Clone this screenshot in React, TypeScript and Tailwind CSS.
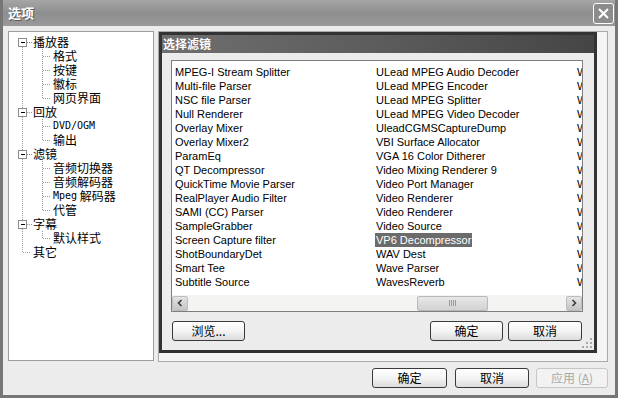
import type { ReactNode } from "react"

const COL1 = [
  "MPEG-I Stream Splitter",
  "Multi-file Parser",
  "NSC file Parser",
  "Null Renderer",
  "Overlay Mixer",
  "Overlay Mixer2",
  "ParamEq",
  "QT Decompressor",
  "QuickTime Movie Parser",
  "RealPlayer Audio Filter",
  "SAMI (CC) Parser",
  "SampleGrabber",
  "Screen Capture filter",
  "ShotBoundaryDet",
  "Smart Tee",
  "Subtitle Source",
]

const COL2 = [
  "ULead MPEG Audio Decoder",
  "ULead MPEG Encoder",
  "ULead MPEG Splitter",
  "ULead MPEG Video Decoder",
  "UleadCGMSCaptureDump",
  "VBI Surface Allocator",
  "VGA 16 Color Ditherer",
  "Video Mixing Renderer 9",
  "Video Port Manager",
  "Video Renderer",
  "Video Renderer",
  "Video Source",
  "VP6 Decompressor",
  "WAV Dest",
  "Wave Parser",
  "WavesReverb",
]

const COL3 = [
  "WDM Capture",
  "WDM Streaming",
  "WDM Tee",
  "WM ASF Reader",
  "WM ASF Writer",
  "WMAudio Decoder",
  "WMVideo Decoder",
  "WMVideo Decoder DMO",
  "WMVideo8 Encoder",
  "WMVideo9 Encoder",
  "Windows Media",
  "Windows Media Player",
  "Windows Media Audio",
  "Windows Media Video",
  "WST Codec",
  "WST Decoder",
]

type TreeRow = { t: string; l: 0 | 1; box?: boolean; end?: boolean; mono?: string }

const TREE: TreeRow[] = [
  { t: "播放器", l: 0, box: true },
  { t: "格式", l: 1 },
  { t: "按键", l: 1 },
  { t: "徽标", l: 1 },
  { t: "网页界面", l: 1, end: true },
  { t: "回放", l: 0, box: true },
  { t: "", l: 1, mono: "DVD/OGM" },
  { t: "输出", l: 1, end: true },
  { t: "滤镜", l: 0, box: true },
  { t: "音频切换器", l: 1 },
  { t: "音频解码器", l: 1 },
  { t: " 解码器", l: 1, mono: "Mpeg" },
  { t: "代管", l: 1, end: true },
  { t: "字幕", l: 0, box: true },
  { t: "默认样式", l: 1, end: true },
  { t: "其它", l: 0 },
]

const DOT = { stroke: "#9a9a9a", strokeWidth: 1, strokeDasharray: "1 1" }

function TreeLines({ row, i }: { row: TreeRow; i: number }) {
  const last = i === TREE.length - 1
  if (row.l === 0) {
    return (
      <svg width="24" height="14" className="shrink-0" shapeRendering="crispEdges">
        {row.box ? (
          <>
            {i > 0 && <line x1="13.5" y1="0" x2="13.5" y2="3" {...DOT} />}
            <line x1="13.5" y1="12" x2="13.5" y2="14" {...DOT} />
            <line x1="18" y1="7.5" x2="23" y2="7.5" {...DOT} />
            <rect x="9.5" y="3.5" width="8" height="8" fill="#fff" stroke="#8c8c8c" />
            <line x1="11.5" y1="7.5" x2="16" y2="7.5" stroke="#000" />
          </>
        ) : (
          <>
            <line x1="13.5" y1="0" x2="13.5" y2={last ? 7.5 : 14} {...DOT} />
            <line x1="13.5" y1="7.5" x2="22" y2="7.5" {...DOT} />
          </>
        )}
      </svg>
    )
  }
  return (
    <svg width="44" height="14" className="shrink-0" shapeRendering="crispEdges">
      <line x1="13.5" y1="0" x2="13.5" y2="14" {...DOT} />
      <line x1="33.5" y1="0" x2="33.5" y2={row.end ? 7.5 : 14} {...DOT} />
      <line x1="33.5" y1="7.5" x2="42" y2="7.5" {...DOT} />
    </svg>
  )
}

function XpButton({ children, className = "", disabled }: { children: ReactNode; className?: string; disabled?: boolean }) {
  return (
    <button
      className={`h-[20px] rounded-[3px] border text-[12px] leading-none flex items-center justify-center font-['Noto_Sans_CJK_SC',sans-serif] ${
        disabled
          ? "border-[#c6c6c6] bg-[#f2f2f2] text-[#a9a9a9]"
          : "border-[#3a3a3a] bg-linear-to-b from-white via-[#f4f4f4] to-[#dcdcdc] text-black"
      } ${className}`}
    >
      {children}
    </button>
  )
}

function ScrollArrow({ dir }: { dir: "l" | "r" }) {
  return (
    <div className="w-[16px] h-[15px] shrink-0 rounded-[2px] border border-[#bdbdbd] bg-linear-to-b from-[#e4e4e4] to-[#c4c4c4] flex items-center justify-center">
      <svg width="8" height="8" viewBox="0 0 8 8">
        <path d={dir === "l" ? "M5.5 1 L2.5 4 L5.5 7" : "M2.5 1 L5.5 4 L2.5 7"} fill="none" stroke="#3c3c3c" strokeWidth="1.6" />
      </svg>
    </div>
  )
}

export default function App() {
  return (
    <div className="w-[618px] h-[398px] flex flex-col overflow-hidden bg-[#ececec] border-x-[3px] border-b-[3px] border-[#767676] font-['Liberation_Sans','Noto_Sans_CJK_SC',sans-serif] text-black">
      {/* 标题栏 */}
      <div className="h-[26px] shrink-0 flex items-center justify-between pl-[5px] pr-[1px] bg-linear-to-b from-[#a6a6a6] via-[#8e8e8e] to-[#999999]">
        <span className="text-[13px] font-bold text-white font-['Noto_Sans_CJK_SC',sans-serif] [text-shadow:1px_1px_0_#5a5a5a]">选项</span>
        <div className="w-[21px] h-[21px] rounded-[3px] border border-white bg-[#8c8c8c] flex items-center justify-center">
          <svg width="13" height="13" viewBox="0 0 13 13">
            <path d="M2 2 L11 11 M11 2 L2 11" stroke="#fff" strokeWidth="2" />
          </svg>
        </div>
      </div>

      {/* 主体 */}
      <div className="h-[336px] shrink-0 flex gap-[4px] pl-[5px] pr-[7px] pt-[5px]">
        {/* 树 */}
        <div className="w-[146px] h-[330px] border border-[#9d9d9d] bg-white pt-[3px] font-['Noto_Sans_CJK_SC',sans-serif] text-[12px] leading-[14px]">
          {TREE.map((row, i) => (
            <div key={i} className="h-[14px] flex items-center whitespace-pre">
              <TreeLines row={row} i={i} />
              {row.mono && <span className="font-['DejaVu_Sans_Mono',monospace] text-[10px]">{row.mono}</span>}
              <span>{row.t}</span>
            </div>
          ))}
        </div>

        {/* 页面 */}
        <div className="w-[450px] h-[331px] border border-[#a9a9a9] bg-[#f5f5f5]">
          <div className="relative w-[438px] h-[321px] border-[3px] border-[#333333] bg-[#ececec] flex flex-col">
            <div className="h-[18px] shrink-0 flex items-center pl-[1px] bg-linear-to-r from-[#6f6f6f] via-[#5c5c5c] to-[#454545]">
              <span className="text-[12px] font-bold text-white font-['Noto_Sans_CJK_SC',sans-serif]">选择滤镜</span>
            </div>

            {/* 列表 */}
            <div className="mt-[7px] ml-[9px] w-[412px] h-[252px] border border-[#7f7f7f] bg-white flex flex-col text-[11px] leading-[14px]">
              <div className="h-[234px] pt-[4px] pl-[2px] flex overflow-hidden">
                {[COL1, COL2, COL3].map((col, c) => (
                  <div key={c} className="w-[201px] shrink-0 flex flex-col">
                    {col.map((name, r) => {
                      const sel = c === 1 && r === 12
                      return (
                        <div key={r} className="h-[14px] whitespace-nowrap">
                          <span className={`px-[1px] py-[1px] ${sel ? "bg-[#6b6b6b] text-white" : ""}`}>{name}</span>
                        </div>
                      )
                    })}
                  </div>
                ))}
              </div>
              <div className="h-[16px] flex items-center bg-[#f4f4f2]">
                <ScrollArrow dir="l" />
                <div className="flex-1 h-full flex items-center">
                  <div className="ml-[229px] w-[71px] h-[15px] rounded-[2px] border border-[#b9b9b9] bg-linear-to-b from-[#e8e8e8] to-[#d2d2d2] flex items-center justify-center gap-[1px]">
                    <div className="w-[1px] h-[6px] bg-[#9a9a9a]" />
                    <div className="w-[1px] h-[6px] bg-[#9a9a9a]" />
                    <div className="w-[1px] h-[6px] bg-[#9a9a9a]" />
                    <div className="w-[1px] h-[6px] bg-[#9a9a9a]" />
                  </div>
                </div>
                <ScrollArrow dir="r" />
              </div>
            </div>

            {/* 按钮 */}
            <div className="mt-[9px] pl-[10px] pr-[12px] flex items-center">
              <XpButton className="w-[73px]">浏览...</XpButton>
              <div className="flex-1" />
              <div className="flex gap-[5px]">
                <XpButton className="w-[73px]">确定</XpButton>
                <XpButton className="w-[74px]">取消</XpButton>
              </div>
            </div>

            <svg width="11" height="11" className="absolute right-[1px] bottom-[1px]">
              {[
                [8, 0], [8, 4], [4, 4], [8, 8], [4, 8], [0, 8],
              ].map(([x, y], k) => (
                <rect key={k} x={x} y={y} width="2" height="2" fill="#a8a8a8" />
              ))}
            </svg>
          </div>
        </div>
      </div>

      {/* 底部按钮 */}
      <div className="flex-1 flex justify-end items-start pt-[6px] pr-[7px]">
        <XpButton className="w-[75px]">确定</XpButton>
        <XpButton className="w-[74px] ml-[8px]">取消</XpButton>
        <XpButton className="w-[72px] ml-[7px]" disabled>
          应用 (<span className="underline">A</span>)
        </XpButton>
      </div>
    </div>
  )
}
